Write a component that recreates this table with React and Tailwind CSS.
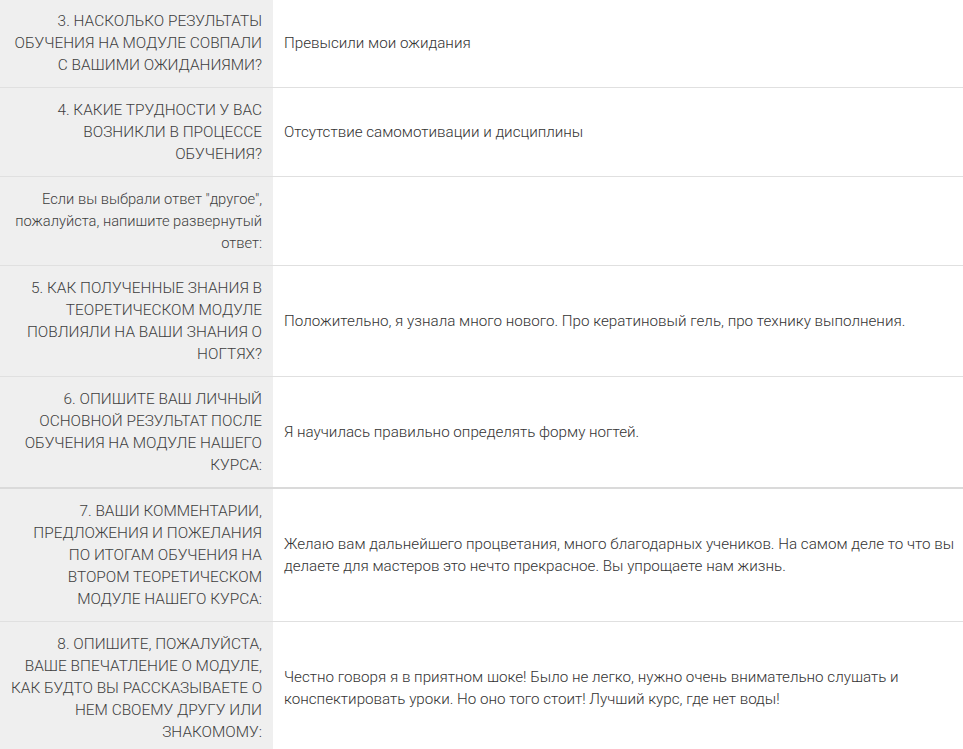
const rows = [
  {
    q: ['3. НАСКОЛЬКО РЕЗУЛЬТАТЫ', 'ОБУЧЕНИЯ НА МОДУЛЕ СОВПАЛИ', 'С ВАШИМИ ОЖИДАНИЯМИ?'],
    a: 'Превысили мои ожидания',
  },
  {
    q: ['4. КАКИЕ ТРУДНОСТИ У ВАС', 'ВОЗНИКЛИ В ПРОЦЕССЕ', 'ОБУЧЕНИЯ?'],
    a: 'Отсутствие самомотивации и дисциплины',
  },
  {
    q: ['Если вы выбрали ответ "другое",', 'пожалуйста, напишите развернутый', 'ответ:'],
    a: '',
    small: true,
  },
  {
    q: ['5. КАК ПОЛУЧЕННЫЕ ЗНАНИЯ В', 'ТЕОРЕТИЧЕСКОМ МОДУЛЕ', 'ПОВЛИЯЛИ НА ВАШИ ЗНАНИЯ О', 'НОГТЯХ?'],
    a: 'Положительно, я узнала много нового. Про кератиновый гель, про технику выполнения.',
  },
  {
    q: ['6. ОПИШИТЕ ВАШ ЛИЧНЫЙ', 'ОСНОВНОЙ РЕЗУЛЬТАТ ПОСЛЕ', 'ОБУЧЕНИЯ НА МОДУЛЕ НАШЕГО', 'КУРСА:'],
    a: 'Я научилась правильно определять форму ногтей.',
    thick: true,
  },
  {
    q: ['7. ВАШИ КОММЕНТАРИИ,', 'ПРЕДЛОЖЕНИЯ И ПОЖЕЛАНИЯ', 'ПО ИТОГАМ ОБУЧЕНИЯ НА', 'ВТОРОМ ТЕОРЕТИЧЕСКОМ', 'МОДУЛЕ НАШЕГО КУРСА:'],
    a: 'Желаю вам дальнейшего процветания, много благодарных учеников. На самом деле то что вы делаете для мастеров это нечто прекрасное. Вы упрощаете нам жизнь.',
  },
  {
    q: ['8. ОПИШИТЕ, ПОЖАЛУЙСТА,', 'ВАШЕ ВПЕЧАТЛЕНИЕ О МОДУЛЕ,', 'КАК БУДТО ВЫ РАССКАЗЫВАЕТЕ О', 'НЕМ СВОЕМУ ДРУГУ ИЛИ', 'ЗНАКОМОМУ:'],
    a: 'Честно говоря я в приятном шоке! Было не легко, нужно очень внимательно слушать и конспектировать уроки. Но оно того стоит! Лучший курс, где нет воды!',
  },
];

export default function App() {
  return (
    <div className="w-[963px] h-[749px] overflow-hidden bg-white font-light" style={{ fontFamily: 'Roboto, "Open Sans", sans-serif' }}>
      <div className="-mt-px">
        {rows.map((row, i) => (
          <div
            key={i}
            className={
              row.thick
                ? 'flex border-b-2 border-[#dadada]'
                : 'flex border-b border-[#e0e0e0]'
            }
          >
            <div
              className={
                row.small
                  ? 'w-[273px] shrink-0 bg-[#efefef] px-[11px] py-[11px] text-right text-[14.7px] leading-[22px] text-[#3e3e3e]'
                  : 'w-[273px] shrink-0 bg-[#efefef] px-[11px] py-[11px] text-right text-[15.4px] leading-[22px] text-[#3e3e3e]'
              }
            >
              {row.q.map((line, j) => (
                <div key={j} className="whitespace-nowrap">{line}</div>
              ))}
            </div>
            <div className="flex flex-1 items-center pl-[11px] text-[15.2px] leading-[22px] text-[#333333]">
              {row.a}
            </div>
          </div>
        ))}
      </div>
    </div>
  );
}
